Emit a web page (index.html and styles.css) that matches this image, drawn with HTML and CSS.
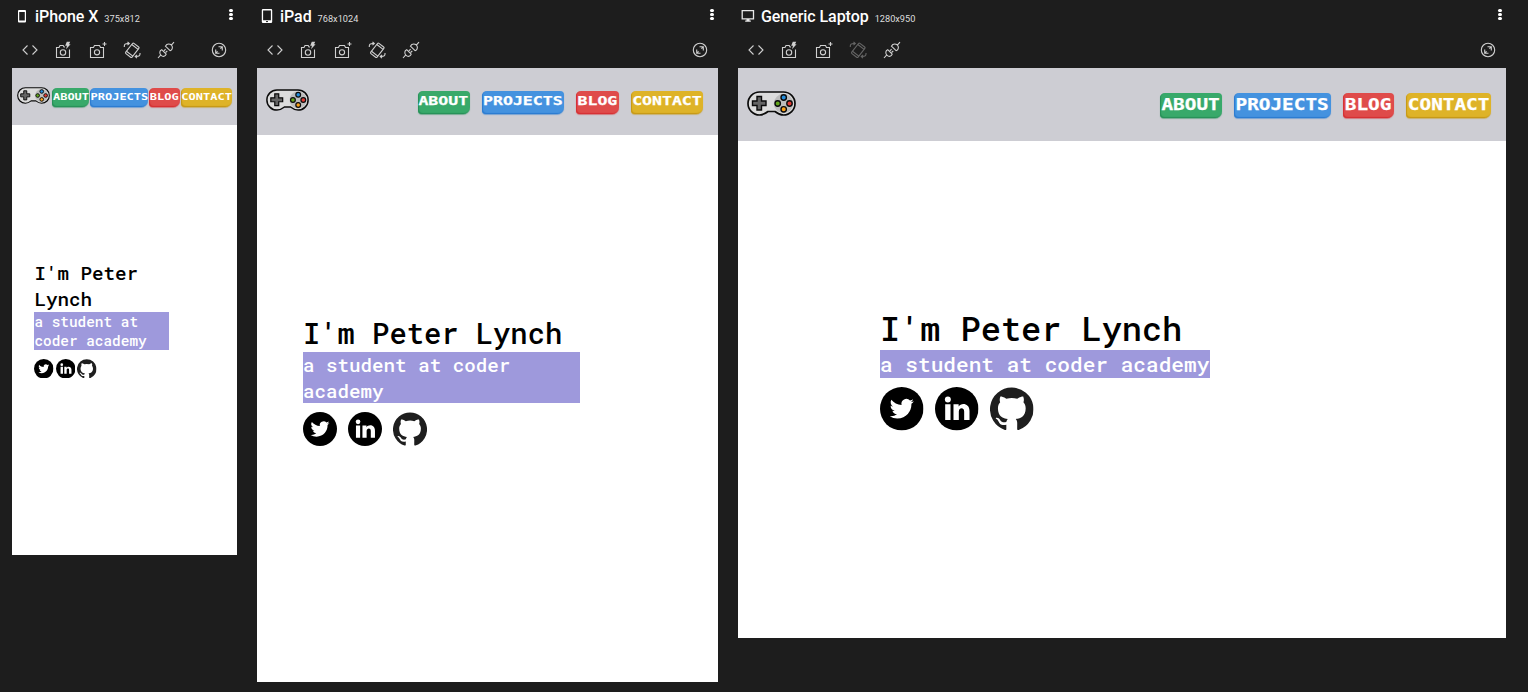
FILE: index.html
```html
<!DOCTYPE html>
<html lang="en">
<head>
<meta charset="utf-8">
<title>Responsive preview</title>
<link rel="stylesheet" href="styles.css">
</head>
<body>
<svg class="defs" width="0" height="0" aria-hidden="true">
  <symbol id="code" viewBox="0 0 18 18"><path d="M6.500 4.500 2 9l4.500 4.500M11.500 4.500 16 9l-4.500 4.500"/></symbol>
  <symbol id="flash" viewBox="0 0 18 18"><path d="M10 6H9L8.200 4.500H5L4 6.500H1.500v10H14.500V8.500"/><circle cx="8" cy="11.500" r="2.700"/><path class="solid" d="M11.800 .8h3.400L14 3.300h1.600L11 8.300l1-3.500h-1.800z"/></symbol>
  <symbol id="camera" viewBox="0 0 18 18"><path d="M1.500 6.500H4.500l1-2h5l1 2h3v10H1.500z"/><circle cx="8" cy="11.300" r="2.600"/><path d="M15.500 1v4M13.500 3h4"/></symbol>
  <symbol id="rotate" viewBox="0 0 18 18"><g transform="translate(9.300 9.300) rotate(38)"><rect x="-4" y="-6.500" width="8" height="13" rx="1"/><path d="M-4-4.300h8M-4 4.300h8"/></g><path d="M1.300 6V5c0-1.700 1-2.500 3.500-2.500h1.200M4.500 .8 6.300 2.500 4.500 4.200M17 12v1c0 1.700-1 2.500-3.500 2.500h-1.200M14 13.800l-1.800 1.700 1.800 1.700"/></symbol>
  <symbol id="plug" viewBox="0 0 18 18"><path d="m1 17 3-3.300M14.300 4.200 17 1.200M8.400 5.200l4.700 4.500c1.800-.5 2.800-2.500 2-4.700-1.300-2.500-5.200-2.800-6.700.2zM4.700 8.700l4.500 4.500c-.6 2.200-3.200 3-5.100 1.200-2-1.900-1.600-4.900.6-5.700zM6.900 9.800l1.700-1.700M8.600 11.500l1.700-1.700"/></symbol>
  <symbol id="expand" viewBox="0 0 18 18"><circle cx="9" cy="9" r="6.700"/><path d="M8.500 5.700h3.800V9.500M9.500 12.300H5.700V8.500M12 6l-1.600 1.600M6 12l1.600-1.600"/></symbol>
  <symbol id="pad" viewBox="0 0 49 25">
    <path d="M12.500 1h24a11.500 11.500 0 0 1 0 23c-4 0-6-1.500-8.500-3.500h-7C18.500 22.500 16.500 24 12.500 24a11.500 11.500 0 0 1 0-23z" fill="#dcdcdc" stroke="#0b0b0b" stroke-width="1.700"/>
    <circle cx="36.500" cy="12.500" r="9.700" fill="#bdbdbd"/>
    <path d="M10 5.500h4.500V10H19v4.500h-4.500V19H10v-4.500H5.500V10H10z" fill="#646464" stroke="#0b0b0b" stroke-width="1.400"/>
    <g stroke="#0b0b0b" stroke-width="1.400"><circle cx="36.700" cy="6.500" r="2.700" fill="#248ddb"/><circle cx="30.700" cy="12.500" r="2.700" fill="#62a51b"/><circle cx="42.500" cy="12.500" r="2.700" fill="#e23932"/><circle cx="36.700" cy="18.300" r="2.700" fill="#f9a11b"/></g>
  </symbol>
  <symbol id="twitter" viewBox="0 0 44 44"><circle cx="22" cy="22" r="22"/><path transform="translate(9.800 9.700) scale(1.020)" fill="#fff" d="M23.950 4.570a10 10 0 0 1-2.820.77 4.960 4.960 0 0 0 2.160-2.720c-.95.550-2 .950-3.130 1.180a4.920 4.920 0 0 0-8.380 4.480C7.690 8.090 4.070 6.130 1.640 3.160a4.920 4.920 0 0 0 1.520 6.570 4.900 4.900 0 0 1-2.230-.61v.06a4.920 4.920 0 0 0 3.950 4.830 5 5 0 0 1-2.210.08 4.940 4.940 0 0 0 4.600 3.420A9.870 9.870 0 0 1 0 19.540a14 14 0 0 0 7.550 2.210c9.050 0 14-7.500 14-13.980 0-.21 0-.42-.02-.63a9.940 9.940 0 0 0 2.420-2.570z"/></symbol>
  <symbol id="linkedin" viewBox="0 0 44 44"><circle cx="22" cy="22" r="22"/><g fill="#fff"><circle cx="13" cy="12.700" r="3"/><path d="M10.300 17.500h5.400v15.800h-5.400zM18.700 17.500h5.200v2.200c2.400-4 11-3.600 11 4.500v9.100h-5.400v-8.600c0-4.500-5.400-4-5.400 0v8.600h-5.400z"/></g></symbol>
  <symbol id="github" viewBox="0 0 16 16"><path fill="#1e1e1e" d="M8 .2a8 8 0 0 0-2.530 15.590c.4.070.55-.17.550-.38 0-.19-.01-.82-.01-1.490-2.010.37-2.530-.49-2.690-.94-.09-.23-.48-.94-.82-1.130-.28-.15-.68-.52-.01-.53.63-.01 1.080.58 1.230.82.720 1.210 1.870.87 2.330.66.070-.52.280-.87.510-1.070-1.780-.2-3.640-.89-3.640-3.950 0-.87.310-1.590.82-2.150-.08-.2-.36-1.020.08-2.120 0 0 .67-.21 2.200.82a7.640 7.640 0 0 1 4 0c1.530-1.040 2.200-.82 2.200-.82.440 1.100.16 1.920.08 2.120.51.560.82 1.270.82 2.150 0 3.070-1.870 3.750-3.650 3.950.29.250.54.730.54 1.480 0 1.070-.01 1.930-.01 2.200 0 .21.150.46.550.38A8 8 0 0 0 8 .2z"/></symbol>
</svg>

<main class="devices">
  <section class="device phone">
    <header class="bar">
      <svg class="kind" viewBox="0 0 16 16"><path class="fill" d="M5 2h6a1 1 0 0 1 1 1v10.500a1 1 0 0 1-1 1H5a1 1 0 0 1-1-1V3a1 1 0 0 1 1-1zm.2 2v8.500h5.600V4z" fill-rule="evenodd"/></svg>
      <h2>iPhone X</h2><span class="size">375x812</span><i class="dots"></i>
    </header>
    <div class="tools"><svg><use href="#code"/></svg><svg><use href="#flash"/></svg><svg><use href="#camera"/></svg><svg><use href="#rotate"/></svg><svg><use href="#plug"/></svg><svg class="last"><use href="#expand"/></svg></div>
    <div class="screen">
      <nav><svg class="pad"><use href="#pad"/></svg><a class="green"><span>ABOUT</span></a><a class="blue"><span>PROJECTS</span></a><a class="red"><span>BLOG</span></a><a class="gold"><span>CONTACT</span></a></nav>
      <div class="intro"><h1>I'm Peter<br>Lynch</h1><p>a student at<br>coder academy</p><div class="social"><svg><use href="#twitter"/></svg><svg><use href="#linkedin"/></svg><svg><use href="#github"/></svg></div></div>
    </div>
  </section>

  <section class="device tablet">
    <header class="bar">
      <svg class="kind" viewBox="0 0 16 16"><path class="fill" d="M5 1h8a1.200 1.200 0 0 1 1.200 1.200v11.600A1.200 1.200 0 0 1 13 15H5a1.200 1.200 0 0 1-1.200-1.200V2.200A1.200 1.200 0 0 1 5 1zm.1 1.500v9.700h7.800V2.500z" fill-rule="evenodd"/><path d="M8 13.600h2" stroke="#1d1d1d"/></svg>
      <h2>iPad</h2><span class="size">768x1024</span><i class="dots"></i>
    </header>
    <div class="tools"><svg><use href="#code"/></svg><svg><use href="#flash"/></svg><svg><use href="#camera"/></svg><svg><use href="#rotate"/></svg><svg><use href="#plug"/></svg><svg class="last"><use href="#expand"/></svg></div>
    <div class="screen">
      <nav><svg class="pad"><use href="#pad"/></svg><a class="green"><span>ABOUT</span></a><a class="blue"><span>PROJECTS</span></a><a class="red"><span>BLOG</span></a><a class="gold"><span>CONTACT</span></a></nav>
      <div class="intro"><h1>I'm Peter Lynch</h1><p>a student at coder<br>academy</p><div class="social"><svg><use href="#twitter"/></svg><svg><use href="#linkedin"/></svg><svg><use href="#github"/></svg></div></div>
    </div>
  </section>

  <section class="device laptop">
    <header class="bar">
      <svg class="kind" viewBox="0 0 16 16"><path d="M3.200 2.600h11.300v8.300H3.200z" fill="none" stroke="#e8e8e8" stroke-width="1.300"/><path d="M7.500 11h3v1.500h1.300v1.200H6.200v-1.200h1.300z" fill="#e8e8e8"/></svg>
      <h2>Generic Laptop</h2><span class="size">1280x950</span><i class="dots"></i>
    </header>
    <div class="tools"><svg><use href="#code"/></svg><svg><use href="#flash"/></svg><svg><use href="#camera"/></svg><svg class="off"><use href="#rotate"/></svg><svg><use href="#plug"/></svg><svg class="last"><use href="#expand"/></svg></div>
    <div class="screen">
      <nav><svg class="pad"><use href="#pad"/></svg><a class="green"><span>ABOUT</span></a><a class="blue"><span>PROJECTS</span></a><a class="red"><span>BLOG</span></a><a class="gold"><span>CONTACT</span></a></nav>
      <div class="intro"><h1>I'm Peter Lynch</h1><p>a student at coder academy</p><div class="social"><svg><use href="#twitter"/></svg><svg><use href="#linkedin"/></svg><svg><use href="#github"/></svg></div></div>
    </div>
  </section>
</main>
</body>
</html>
```

FILE: styles.css
```css
* { box-sizing: border-box; }
body { margin: 0; background: #1d1d1d; height: 692px; overflow: hidden; font-family: Roboto, "Liberation Sans", sans-serif; }
svg { display: block; flex: none; }
.defs { position: absolute; }
.devices { display: flex; gap: 20px; padding-left: 12px; align-items: flex-start; }
.device { flex: none; }
.phone { width: 225px; }
.tablet { width: 461px; }
.laptop { width: 768px; }

.bar { height: 32px; display: flex; align-items: center; color: #fff; }
.kind { width: 16px; height: 16px; margin-left: 1px; }
.phone .kind { margin-left: 2px; }
.kind .fill { fill: #fff; }
.bar h2 { margin: 1px 0 0 6px; font-size: 16px; line-height: 20px; font-weight: 500; letter-spacing: -.06px; white-space: nowrap; }
.phone h2 { margin-left: 5px; }
.tablet h2 { margin-left: 6px; }
.size { margin: 6px 0 0 6px; font-size: 9.200px; line-height: 12px; color: #dedede; }
.dots { width: 3.500px; height: 3.500px; border-radius: 50%; margin: -3px 4.500px 0 auto; background: #fff; box-shadow: 0 -4px #fff, 0 4px #fff; }

.tools { height: 36px; display: flex; align-items: center; gap: 16px; padding: 0 9px; }
.tools svg { width: 18px; height: 18px; fill: none; stroke: #d0d0d0; stroke-width: 1.100; }
.tools .solid { fill: #c9c9c9; stroke: none; }
#flash .solid { fill: #d0d0d0; stroke: none; }
.tools .off { opacity: .4; }
.tools .last { margin-left: auto; }

.screen { background: #fff; }
.phone .screen { height: 487.400px; }
.tablet .screen { height: 614.400px; }
.laptop .screen { height: 570px; }

nav { display: flex; background: #cdcdd3; gap: 12px; }
nav .pad { margin-right: auto; }
nav a { display: flex; justify-content: center; flex: none; border-radius: 5px 4px 7px 4px; color: #fff; font-family: "DejaVu Sans Mono", monospace; font-weight: 700; white-space: nowrap; }
nav span { transform: scaleX(1.290); flex: none; -webkit-text-stroke: .25px #fff; }
.green { background: #38a96a; box-shadow: inset 1px -1px 1px #278f58, 0 1px 1px #278f5888; }
.blue { background: #4492df; box-shadow: inset 1px -1px 1px #2b7bd0, 0 1px 1px #2b7bd088; }
.red { background: #df4b4a; box-shadow: inset 1px -1px 1px #d52f32, 0 1px 1px #d52f3288; }
.gold { background: #deb328; box-shadow: inset 1px -1px 1px #c59716, 0 1px 1px #c5971688; }

.phone nav { height: 57.400px; padding: 20px 5px 0; gap: 1px; }
.phone nav a { height: 19px; font-size: 9.300px; line-height: 18px; }
.phone nav span { -webkit-text-stroke: 0; }
.phone .pad { width: 33px; height: 17px; margin-top: -1px; }
.phone .green { width: 37px; }
.phone .blue { width: 58px; }
.phone .red { width: 31px; }
.phone .gold { width: 51px; }

.tablet nav { height: 67px; padding: 23px 15px 0 9px; }
.tablet nav a { height: 22.500px; font-size: 12.800px; line-height: 20px; }
.tablet .pad { width: 43px; height: 22px; margin-top: -2px; }
.tablet .green { width: 52.500px; }
.tablet .blue { width: 82px; }
.tablet .red { width: 43px; }
.tablet .gold { width: 72px; }

.laptop nav { height: 73px; padding: 25px 15px 0 9px; }
.laptop nav a { height: 25px; font-size: 15px; line-height: 24px; }
.laptop .pad { width: 49px; height: 25px; margin-top: -2px; }
.laptop .green { width: 62px; }
.laptop .blue { width: 97px; }
.laptop .red { width: 51px; }
.laptop .gold { width: 85px; }

.intro { font-family: "Roboto Mono", "DejaVu Sans Mono", monospace; white-space: nowrap; }
.intro h1, .intro p { margin: 0; font-weight: 500; }
.intro h1 { color: #000; }
.intro p { color: #fff; background: #9e99dc; }
.social { display: flex; }

.phone .intro { padding: 135px 0 0 22.400px; }
.phone h1 { font-size: 19.200px; line-height: 25.600px; }
.phone p { width: 135px; font-size: 14.400px; line-height: 19px; }
.phone .social { gap: 2px; padding-top: 9px; }
.phone .social svg { width: 19.500px; height: 19.500px; }

.tablet .intro { padding: 180px 0 0 46px; }
.tablet h1 { font-size: 28.800px; line-height: 37px; }
.tablet p { width: 276.500px; font-size: 19.200px; line-height: 25.600px; }
.tablet .social { gap: 11px; padding-top: 9px; }
.tablet .social svg { width: 34px; height: 34px; }

.laptop .intro { padding: 166px 0 0 142px; }
.laptop h1 { font-size: 33.600px; line-height: 43px; }
.laptop p { width: 330px; font-size: 21.120px; line-height: 28px; }
.laptop .social { gap: 11.500px; padding-top: 9px; }
.laptop .social svg { width: 43.500px; height: 43.500px; }
```
